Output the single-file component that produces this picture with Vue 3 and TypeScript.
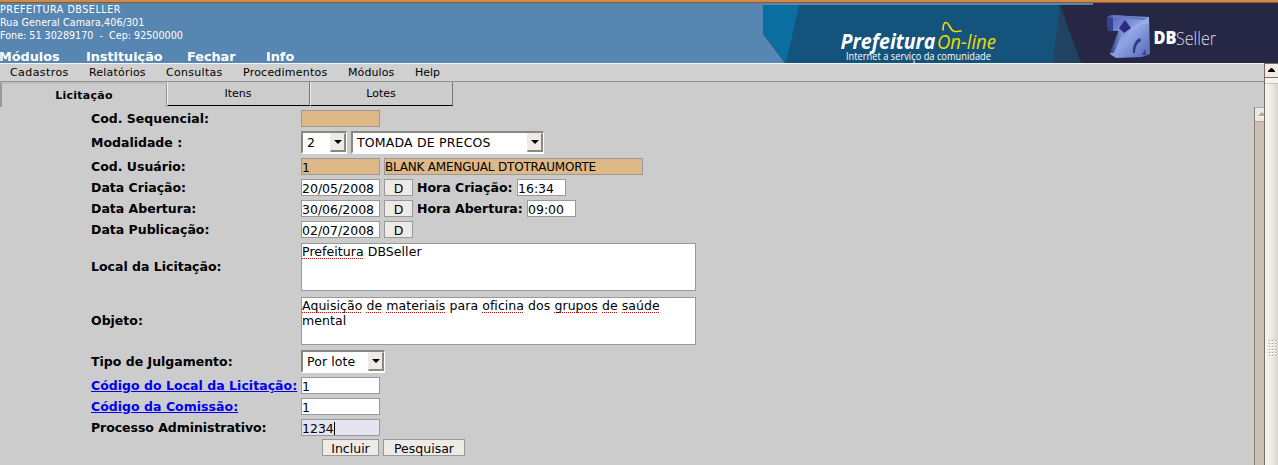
<script setup lang="ts">
import { ref } from 'vue'

interface Item { label: string; width: number; spacing?: number }
interface Word { text: string; marked?: boolean }

const mainMenu: Item[] = [
  { label: 'Módulos', width: 87 },
  { label: 'Instituição', width: 101 },
  { label: 'Fechar', width: 79 },
  { label: 'Info', width: 60 },
]
const subMenu: Item[] = [
  { label: 'Cadastros', width: 79, spacing: 0.42 },
  { label: 'Relatórios', width: 77, spacing: 0.2 },
  { label: 'Consultas', width: 77, spacing: 0.3 },
  { label: 'Procedimentos', width: 105, spacing: 0.22 },
  { label: 'Módulos', width: 67, spacing: 0.1 },
  { label: 'Help', width: 50, spacing: 0 },
]
const tabs = ['Licitação', 'Itens', 'Lotes']
const activeTab = ref(0)

const place: Word[] = [{ text: 'Prefeitura', marked: true }, { text: 'DBSeller' }]
const subject: Word[] = [
  { text: 'Aquisição', marked: true },
  { text: 'de', marked: true },
  { text: 'materiais', marked: true },
  { text: 'para' },
  { text: 'oficina', marked: true },
  { text: 'dos' },
  { text: 'grupos', marked: true },
  { text: 'de', marked: true },
  { text: 'saúde', marked: true },
  { text: 'mental' },
]
const grip = Array.from({ length: 18 }, (_, i) => i)
</script>

<template>
  <div class="page">
    <header class="banner">
      <div class="address">
        <div class="l1">PREFEITURA DBSELLER</div>
        <div class="l2">Rua General Camara,406/301</div>
        <div class="l3">Fone: 51 30289170 &nbsp;-&nbsp; Cep: 92500000</div>
      </div>
      <nav class="main-menu">
        <span v-for="m in mainMenu" :key="m.label" :style="{ width: m.width + 'px' }">{{ m.label }}</span>
      </nav>
      <svg class="brand" width="515" height="60" viewBox="763 3 515 60">
        <defs>
          <linearGradient id="cube" x1="0" y1="0" x2="1" y2="1">
            <stop offset="0" stop-color="#4a5bb0" />
            <stop offset="0.5" stop-color="#8fa6e4" />
            <stop offset="1" stop-color="#5066b8" />
          </linearGradient>
          <linearGradient id="side" x1="0" y1="0" x2="1" y2="0">
            <stop offset="0" stop-color="#31408c" />
            <stop offset="1" stop-color="#8ca0e0" />
          </linearGradient>
        </defs>
        <path d="M763 5H1278V63H785L763 34Z" fill="#14547c" />
        <path d="M763 5H799L786 63L763 34Z" fill="#0a6fa0" />
        <path d="M1060 5L1053 63H1084Z" fill="#214261" />
        <path d="M1060 5H1093V3H1278V63H1081Z" fill="#262645" />
        <g>
          <path d="M1107 17L1111 15L1149 17L1150 54L1142 57L1116 58L1110 54L1119 36L1118 31L1108 31Z" fill="url(#cube)" />
          <path d="M1107 17L1113 18V31L1108 31Z" fill="#35438e" />
          <path d="M1113 15L1148 18L1144 20L1113 18Z" fill="#6578c6" />
          <path d="M1118 32L1124 29L1114 53L1110 53Z" fill="url(#side)" />
          <path d="M1126 36L1137 27L1149 23L1149 18L1144 20L1132 27Z" fill="#a2b6ed" opacity=".5" />
          <path d="M1125 20L1131 28L1124 33L1119 28Z" fill="#2b2c80" />
          <path d="M1133 53C1132 46 1136 39 1140 38L1141 41C1137 43 1135 48 1135 53Z" fill="#303c83" />
          <path d="M1142 55L1145 49L1146 55Z" fill="#34428c" />
        </g>
        <text x="840.500" y="48.500" class="pref" textLength="95" lengthAdjust="spacingAndGlyphs">Prefeitura</text>
        <text x="937" y="48.500" class="online" textLength="59" lengthAdjust="spacingAndGlyphs">On-line</text>
        <path d="M943 30.500C943 25 944 22.500 946 22.500C949 22.500 950 30 954 31.300C957 32 959 31 961.500 31" fill="none" stroke="#f0d80c" stroke-width="1.700" />
        <text x="846" y="60" class="tag" textLength="145" lengthAdjust="spacingAndGlyphs">Internet a serviço da comunidade</text>
        <text x="1153.500" y="44" class="db" textLength="23" lengthAdjust="spacingAndGlyphs">DB</text>
        <text x="1176" y="44.500" class="seller" textLength="40" lengthAdjust="spacingAndGlyphs">Seller</text>
      </svg>
    </header>

    <div class="lower">
      <div class="left">
        <nav class="sub-menu">
          <span v-for="m in subMenu" :key="m.label" :style="{ width: m.width + 'px', letterSpacing: m.spacing + 'px' }">{{ m.label }}</span>
        </nav>
        <div class="tabs">
          <button v-for="(t, i) in tabs" :key="t" class="tab" :class="{ active: i === activeTab }" @click="activeTab = i">{{ t }}</button>
        </div>
        <div class="content">
          <form class="form" @submit.prevent>
            <div class="row"><label>Cod. Sequencial:</label><div class="field tan"></div></div>
            <div class="row tall">
              <label>Modalidade :</label>
              <div class="select s-mod"><span>2</span><i><svg width="8" height="4" viewBox="0 0 8 4"><path d="M0 0H8L4 4Z" /></svg></i></div>
              <div class="select s-name"><span>TOMADA DE PRECOS</span><i><svg width="8" height="4" viewBox="0 0 8 4"><path d="M0 0H8L4 4Z" /></svg></i></div>
            </div>
            <div class="row"><label>Cod. Usuário:</label><div class="field tan">1</div><div class="field tan user">BLANK AMENGUAL DTOTRAUMORTE</div></div>
            <div class="row"><label>Data Criação:</label><div class="field">20/05/2008</div><div class="btn d">D</div><b class="h1">Hora Criação:</b><div class="field hour">16:34</div></div>
            <div class="row"><label>Data Abertura:</label><div class="field">30/06/2008</div><div class="btn d">D</div><b class="h2">Hora Abertura:</b><div class="field hour">09:00</div></div>
            <div class="row"><label>Data Publicação:</label><div class="field">02/07/2008</div><div class="btn d">D</div></div>
            <div class="row area-row">
              <label>Local da Licitação:</label>
              <div class="area"><template v-for="(w, i) in place" :key="i"><span :class="{ marked: w.marked }">{{ w.text }}</span>{{ ' ' }}</template></div>
            </div>
            <div class="row area-row">
              <label>Objeto:</label>
              <div class="area"><template v-for="(w, i) in subject" :key="i"><span :class="{ marked: w.marked }">{{ w.text }}</span>{{ ' ' }}</template></div>
            </div>
            <div class="row tall">
              <label>Tipo de Julgamento:</label>
              <div class="select s-tipo"><span>Por lote</span><i><svg width="8" height="4" viewBox="0 0 8 4"><path d="M0 0H8L4 4Z" /></svg></i></div>
            </div>
            <div class="row"><label><a>Código do Local da Licitação:</a></label><div class="field">1</div></div>
            <div class="row"><label><a>Código da Comissão:</a></label><div class="field">1</div></div>
            <div class="row"><label class="tight">Processo Administrativo:</label><div class="field focus">1234<i class="caret"></i></div></div>
            <div class="actions"><div class="btn inc">Incluir</div><div class="btn pes">Pesquisar</div></div>
          </form>
          <div class="inner-scroll"><div class="inner-up"><svg width="8" height="5" viewBox="0 0 8 5"><path d="M0 4L4 0L8 4Z" fill="#aaa8a2" /><path d="M1 4.500H8" stroke="#fff" /></svg></div></div>
        </div>
      </div>
      <div class="scroll">
        <div class="up"><svg width="7" height="4" viewBox="0 0 7 4"><path d="M0 4V3L3 0H4L7 3V4Z" /></svg></div>
        <div class="gap"></div>
        <div class="thumb"><div class="grip"><i v-for="g in grip" :key="g"></i></div></div>
      </div>
    </div>
  </div>
</template>

<style>
body { margin: 0; overflow: hidden; }
</style>

<style scoped>
.page { width: 1278px; height: 465px; overflow: hidden; display: flex; flex-direction: column; background: #ccc; color: #000; font-family: "DejaVu Sans", sans-serif; font-size: 12.5px; box-sizing: border-box; }
.page * { box-sizing: border-box; }
.banner { position: relative; height: 63px; flex: none; background: #5786b2; border-top: 3px solid #d18b46; color: #fff; white-space: nowrap; }
.banner::before { content: ""; position: absolute; left: 0; right: 0; top: -1px; height: 1px; background: #845b32; }
.address { height: 46px; font-size: 9.6px; line-height: 13px; }
.l1 { letter-spacing: .52px; }
.l2 { letter-spacing: .07px; }
.l3 { letter-spacing: 0; }
.main-menu { display: flex; font-size: 12.8px; font-weight: bold; line-height: 15px; margin-left: -1px; }
.main-menu span { flex: none; }
.brand { position: absolute; right: 0; top: 0; }
.brand text { font-family: "Open Sans", sans-serif; fill: #fff; }
.brand .pref { font: italic bold 20.5px "Open Sans", sans-serif; }
.brand .online { font: italic 20px "Open Sans", sans-serif; fill: #f0d80c; }
.brand .tag { font: 500 10.5px "Open Sans", sans-serif; }
.brand .db { font: 800 17px "Open Sans", sans-serif; }
.brand .seller { font: 300 19px "Open Sans", sans-serif; fill: #dcdce6; }
.lower { flex: 1; display: flex; min-height: 0; }
.left { flex: 1; display: flex; flex-direction: column; min-width: 0; }
.sub-menu { height: 19px; flex: none; display: flex; padding-left: 10px; border-top: 1px solid #f4f4f4; border-bottom: 1px solid #919191; background: #d0d0d0; font-size: 11px; line-height: 17px; }
.sub-menu span { flex: none; white-space: nowrap; }
.tabs { height: 25px; flex: none; display: flex; }
.tab { font: 11px "DejaVu Sans", sans-serif; width: 143px; height: 24px; padding: 0 1px 0 0; background: #ccc; border: 0; border-right: 1px solid #777; border-bottom: 1px solid #000; border-left: 1px solid #eee; color: #000; }
.tab.active { width: 167px; height: 25px; font-weight: bold; letter-spacing: .25px; border-top: 2px solid #bdbdbd; border-left: 2px solid #999; border-right: 1px solid #999; border-bottom: 0; padding: 0; }
.content { flex: 1; display: flex; justify-content: space-between; min-height: 0; }
.form { padding: 1px 0 0 91px; }
.row { display: flex; align-items: center; height: 21px; white-space: nowrap; }
.row.tall { height: 27px; }
.row.area-row { height: 54px; }
label { width: 210px; flex: none; font-weight: bold; line-height: 17px; }
.tight { letter-spacing: -.05px; }
.area-row label { padding-bottom: 2px; }
label a { color: #00e; text-decoration: underline; letter-spacing: .03px; }
.field { width: 79px; height: 17px; flex: none; margin-right: 4px; border: 1px solid #999; background: #fff; line-height: 17px; }
.tan { background: #deb887; }
.user { width: 259px; font-size: 12px; letter-spacing: -.2px; }
.hour { width: 49px; }
.focus { background: #e6e4f1; }
.caret { display: inline-block; width: 1px; height: 13px; background: #000; vertical-align: -2px; }
.btn { height: 17px; border: 1px solid #999; background: #eeebe7; text-align: center; line-height: 17px; }
.btn.d { width: 29px; margin-right: 4px; }
.h1 { width: 100px; }
.h2 { width: 110px; }
.select { height: 23px; display: flex; justify-content: space-between; margin-right: 4px; background: #fff; border: 2px solid #fff; border-top-color: #88887f; border-left-color: #88887f; border-right-width: 1px; line-height: 20px; padding-left: 4px; }
.select i { width: 16px; height: 19px; background: #eeebe7; border: 1px solid #eeebe7; border-right: 2px solid #88887f; border-bottom: 2px solid #88887f; display: flex; align-items: center; justify-content: center; }
.s-mod { width: 46px; }
.s-name { width: 193px; letter-spacing: .18px; }
.s-tipo { width: 84px; letter-spacing: .1px; }
.area { width: 395px; height: 48px; border: 1px solid #999; background: #fff; line-height: 15px; white-space: normal; letter-spacing: .06px; }
.marked { background: repeating-linear-gradient(90deg, #e00 0 1px, transparent 1px 2px) left bottom / 100% 1px no-repeat; }
.actions { display: flex; gap: 4px; padding: 1px 0 0 231px; }
.inc { width: 57px; }
.pes { width: 82px; }
.inner-scroll { width: 10px; background: #ccc0b5; border-left: 1px solid #8b7d72; }
.inner-up { height: 15px; background: #ebe8e3; border: 1px solid #b5aa9c; border-left: 0; border-right: 0; padding: 4px 0 0 3px; overflow: hidden; }
.inner-up svg { display: block; }
.scroll { width: 14px; flex: none; border-left: 1px solid #7a6c62; display: flex; flex-direction: column; background: #eee; }
.up { height: 15px; border-top: 1px solid #7a6c62; border-bottom: 1px solid #7a6c62; background: #efece7; padding: 4px 0 0 3px; }
.up svg { display: block; }
.gap { height: 6px; background: #f5f4f2; border-bottom: 1px solid #c9c5be; }
.thumb { flex: 1; background: linear-gradient(90deg, #f8f6f4, #eeebe7 50%, #d9d3ca); padding: 256px 0 0 3px; }
.grip { display: grid; grid-template-columns: repeat(3, 2px); gap: 1px; }
.grip i { width: 2px; height: 2px; background: #fff; border-top: 1px solid #aaa49c; border-left: 1px solid #fff; }
</style>
